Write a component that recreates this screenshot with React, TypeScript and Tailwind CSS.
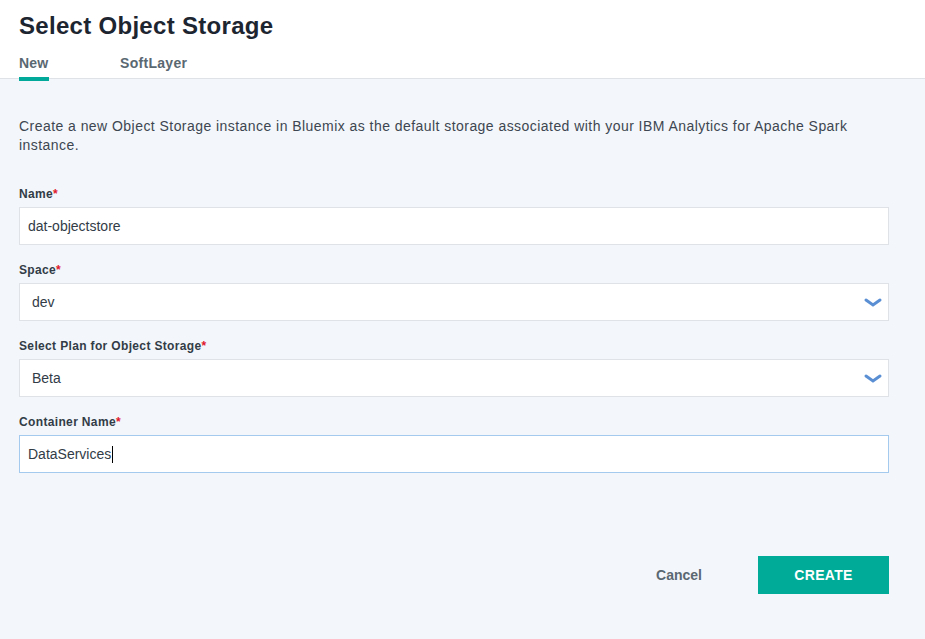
import React from "react";

function Field({ label, children }: { label: string; children: React.ReactNode }) {
  return (
    <div className="flex flex-col">
      <label className="mb-[6px] h-[13px] text-[12px] leading-[13px] font-bold tracking-[0.35px] text-[#323c47]">
        {label}
        <span className="text-[#e0182d]">*</span>
      </label>
      {children}
    </div>
  );
}

function Chevron() {
  return (
    <svg width="18" height="10" viewBox="0 0 18 10" className="absolute right-[6px] top-[14px]">
      <path d="M2 2 L9 7 L16 2" fill="none" stroke="#5b8fd4" strokeWidth="3" strokeLinecap="round" />
    </svg>
  );
}

export default function App() {
  return (
    <div className="min-h-[639px] w-[925px] bg-[#f3f6fa] font-['Liberation_Sans',Arial,sans-serif] text-[#323c47]">
      {/* Header */}
      <div className="h-[79px] border-b border-[#dfe3e8] bg-white px-[19px]">
        <h1 className="pt-[12px] text-[24px] leading-[28px] font-bold tracking-[0.3px] text-[#1d2531]">Select Object Storage</h1>
        <div className="mt-[15px] flex gap-[51px]">
          <div className="flex flex-col">
            <span className="text-[14px] leading-[16px] font-bold tracking-[0.2px] text-[#5a6872]">New</span>
            <span className="mt-[6px] h-[4px] w-[30px] bg-[#00a99a]" />
          </div>
          <span className="pl-[20px] text-[14px] leading-[16px] font-bold tracking-[0.3px] text-[#5a6872]">SoftLayer</span>
        </div>
      </div>

      {/* Body */}
      <div className="px-[19px] pt-[38px]">
        <p className="w-[860px] text-[14px] leading-[19px] tracking-[0.45px] text-[#3d4651]">
          Create a new Object Storage instance in Bluemix as the default storage associated with your IBM Analytics for Apache Spark instance.
        </p>

        <div className="mt-[33px] flex w-[870px] flex-col gap-[19px]">
          <Field label="Name">
            <div className="flex h-[38px] items-center border border-[#dfe3e8] bg-white px-[8px] text-[14px]">dat-objectstore</div>
          </Field>
          <Field label="Space">
            <div className="relative flex h-[38px] items-center border border-[#dfe3e8] bg-white px-[12px] text-[14px]">
              dev
              <Chevron />
            </div>
          </Field>
          <Field label="Select Plan for Object Storage">
            <div className="relative flex h-[38px] items-center border border-[#dfe3e8] bg-white px-[12px] text-[14px]">
              Beta
              <Chevron />
            </div>
          </Field>
          <Field label="Container Name">
            <div className="flex h-[38px] items-center border border-[#a4cbee] bg-white px-[8px] text-[14px]">
              DataServices
              <span className="ml-[1px] h-[17px] w-[1px] bg-black" />
            </div>
          </Field>
        </div>

        <div className="mt-[83px] flex w-[870px] items-center justify-end">
          <span className="mr-[56px] text-[14px] font-bold text-[#5a6872]">Cancel</span>
          <button className="h-[38px] w-[131px] bg-[#00ab97] text-[14px] font-bold tracking-[0.3px] text-white">CREATE</button>
        </div>
      </div>
    </div>
  );
}
